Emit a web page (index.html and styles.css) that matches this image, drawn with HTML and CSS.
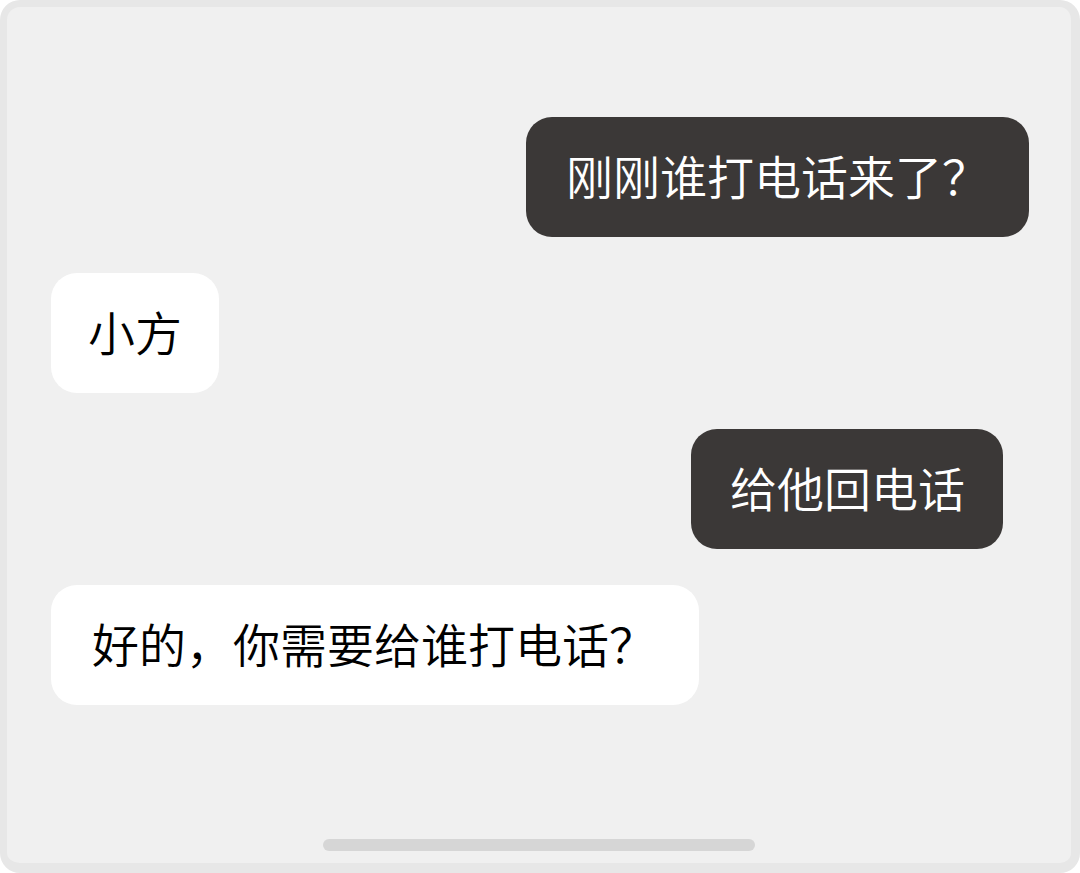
FILE: index.html
```html
<!DOCTYPE html>
<html lang="zh">
<head>
<meta charset="utf-8">
<title>Chat</title>
<link rel="stylesheet" href="styles.css">
</head>
<body>
<div class="frame">
  <div class="chat">
    <div class="msg out">刚刚谁打电话来了？</div>
    <div class="msg in short">小方</div>
    <div class="msg out inset">给他回电话</div>
    <div class="msg in wide">好的，你需要给谁打电话？</div>
  </div>
  <div class="home-indicator"></div>
</div>
</body>
</html>
```
FILE: styles.css
```css
html, body {
  margin: 0;
  padding: 0;
  background: #ffffff;
}
body {
  width: 1080px;
  height: 873px;
  overflow: hidden;
}
.frame {
  box-sizing: border-box;
  width: 1080px;
  height: 873px;
  border: 7px solid #e7e7e7;
  border-right-width: 9px;
  border-bottom-width: 10px;
  border-radius: 20px;
  background: #f0f0f0;
  display: flex;
  flex-direction: column;
  font-family: "Noto Sans CJK SC", "Noto Sans", sans-serif;
}
.chat {
  display: flex;
  flex-direction: column;
  gap: 36px;
  padding: 110px 42px 0 44px;
}
.msg {
  height: 120px;
  box-sizing: border-box;
  display: flex;
  align-items: center;
  padding: 0 40px 6px;
  border-radius: 26px;
  font-size: 47px;
  font-weight: 350;
  white-space: nowrap;
}
.out {
  align-self: flex-end;
  background: #3b3837;
  color: #ffffff;
}
.in {
  align-self: flex-start;
  background: #ffffff;
  color: #000000;
}
.short {
  padding-left: 37px;
  padding-right: 37px;
}
.inset {
  margin-right: 26px;
  padding-left: 39px;
  padding-right: 38px;
}
.wide {
  padding-left: 41px;
  padding-right: 43px;
}
.home-indicator {
  margin: auto auto 12px;
  width: 432px;
  height: 12px;
  border-radius: 6px;
  background: #d6d6d6;
}
```
